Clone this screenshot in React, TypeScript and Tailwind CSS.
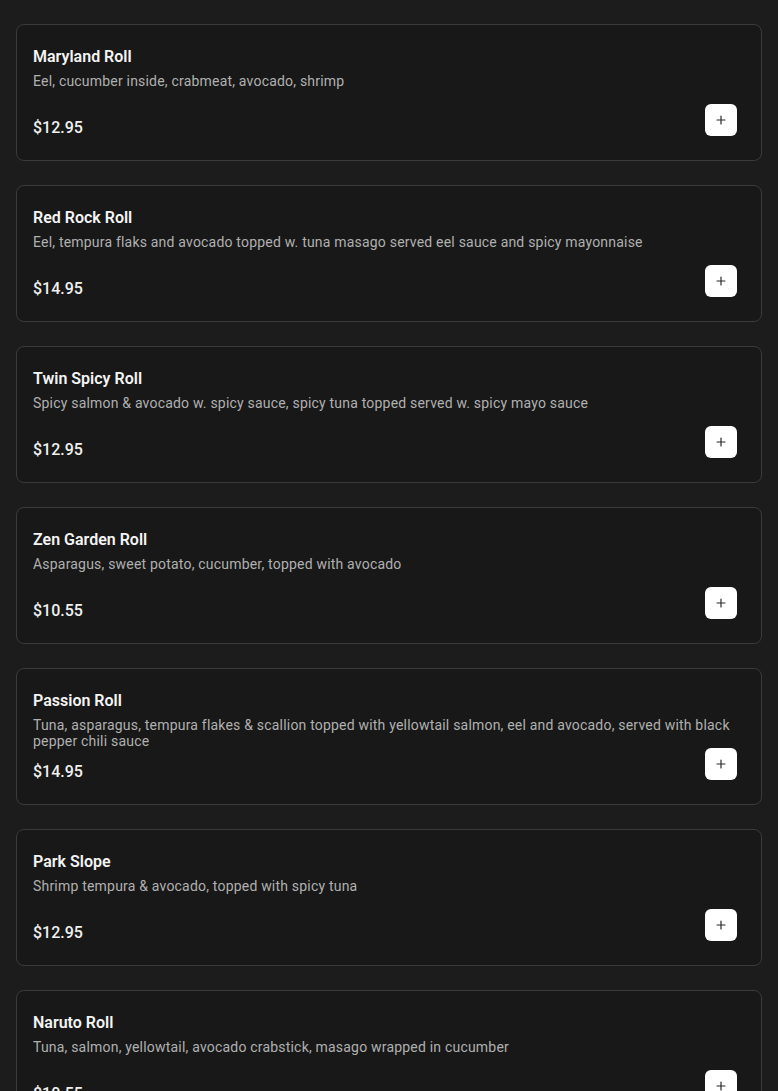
import React from "react";

type Roll = {
    nombre: string;
    descripcion: string;
    precio: string;
};

const rolls: Roll[] = [
    { nombre: "Maryland Roll", descripcion: "Eel, cucumber inside, crabmeat, avocado, shrimp", precio: "$12.95" },
    { nombre: "Red Rock Roll", descripcion: "Eel, tempura flaks and avocado topped w. tuna masago served eel sauce and spicy mayonnaise", precio: "$14.95" },
    { nombre: "Twin Spicy Roll", descripcion: "Spicy salmon & avocado w. spicy sauce, spicy tuna topped served w. spicy mayo sauce", precio: "$12.95" },
    { nombre: "Zen Garden Roll", descripcion: "Asparagus, sweet potato, cucumber, topped with avocado", precio: "$10.55" },
    { nombre: "Passion Roll", descripcion: "Tuna, asparagus, tempura flakes & scallion topped with yellowtail salmon, eel and avocado, served with black pepper chili sauce", precio: "$14.95" },
    { nombre: "Park Slope", descripcion: "Shrimp tempura & avocado, topped with spicy tuna", precio: "$12.95" },
    { nombre: "Naruto Roll", descripcion: "Tuna, salmon, yellowtail, avocado crabstick, masago wrapped in cucumber", precio: "$10.55" },
];

const PlusIcon = () => (
    <svg width="10" height="10" viewBox="0 0 10 10" fill="none" stroke="#2a2a2a" strokeWidth="1.2" strokeLinecap="round">
        <path d="M5 1v8M1 5h8" />
    </svg>
);

const RollCard = ({ roll }: { roll: Roll }) => {
    return (
        <div className="bg-[#181818] border border-[#3b3b3b] rounded-lg px-4 py-5 flex flex-col">
            <h3 className="text-base leading-6 font-semibold text-[#f4f4f4]">{roll.nombre}</h3>
            <p className="mt-1 h-8 text-sm leading-4 tracking-[0.2px] text-[#b0b0b0]">{roll.descripcion}</p>
            {/* el boton sube sobre la linea del precio */}
            <div className="mt-[11px] flex justify-between items-end">
                <span className="text-base leading-6 font-medium text-[#f0f0f0]">{roll.precio}</span>
                <button className="w-8 h-8 -mt-3 mb-1 mr-2 rounded-md bg-white flex items-center justify-center">
                    <PlusIcon />
                </button>
            </div>
        </div>
    );
};

const App = () => {
    return (
        <div className="min-h-screen bg-[#1c1c1c] px-4 pt-6 pb-6 font-['Roboto',sans-serif]">
            <div className="flex flex-col gap-6">
                {rolls.map((roll, index) => (
                    <RollCard key={index} roll={roll} />
                ))}
            </div>
        </div>
    );
};

export default App;
